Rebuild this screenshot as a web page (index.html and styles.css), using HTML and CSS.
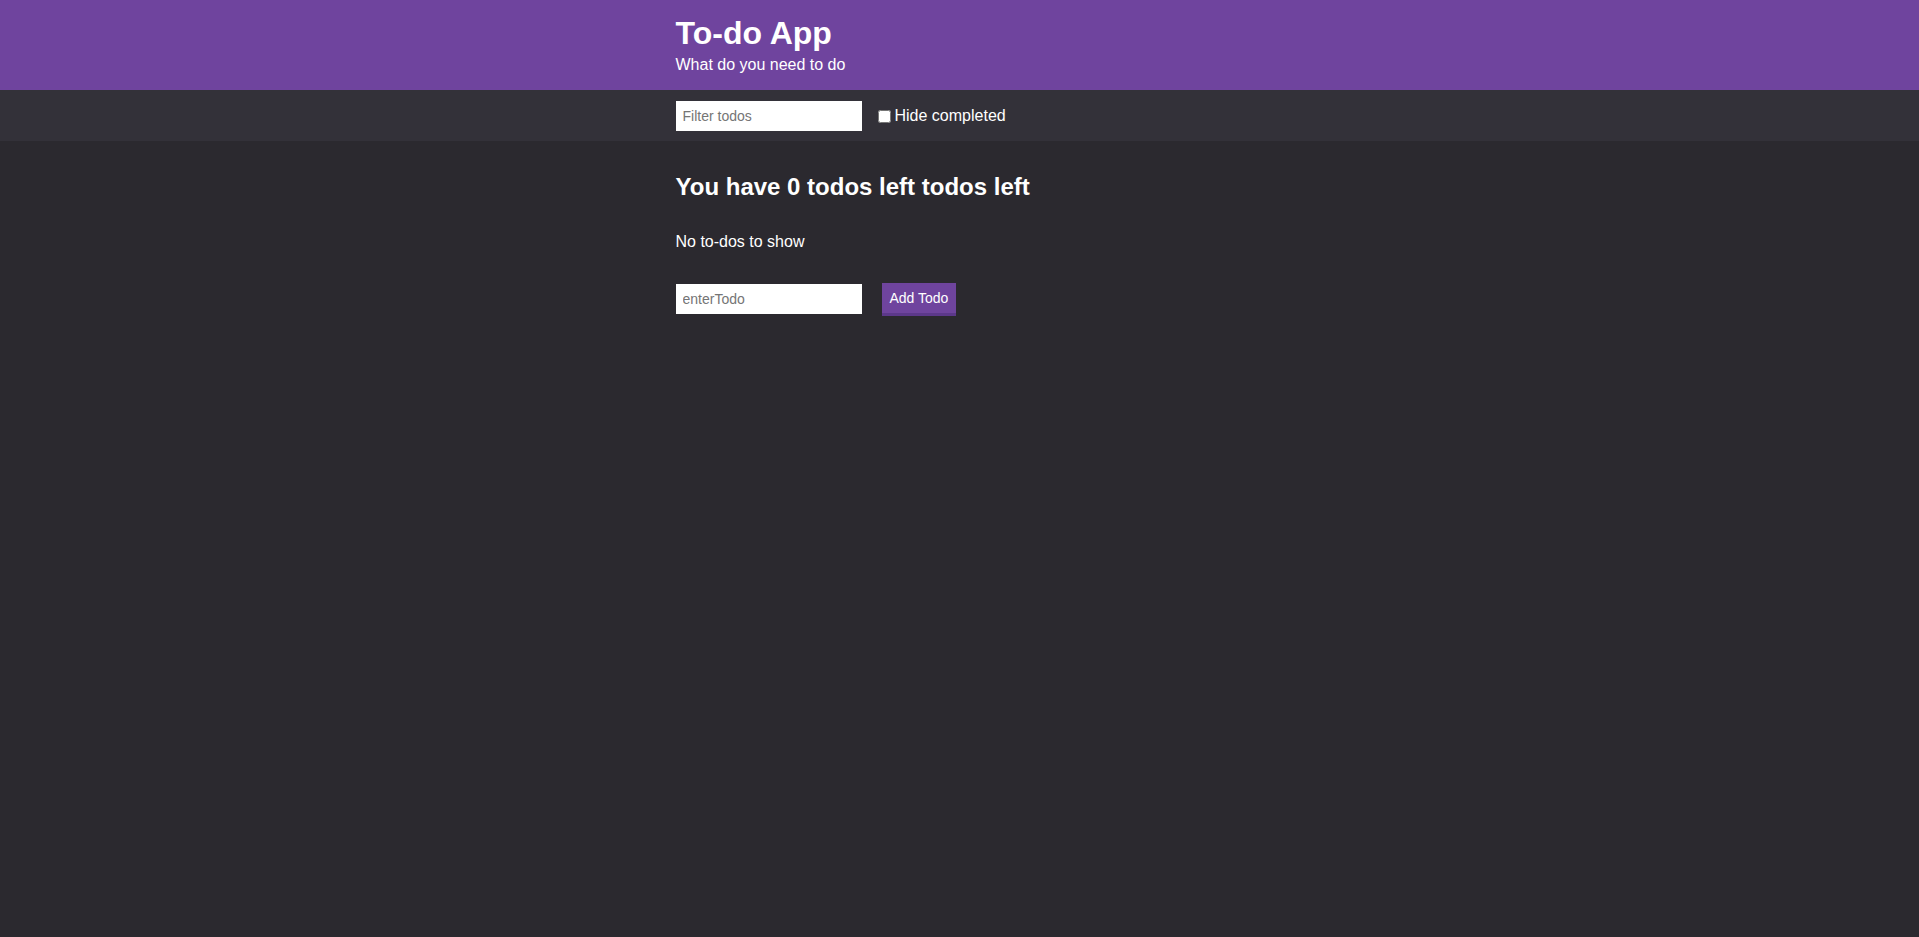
FILE: index.html
```html
<!DOCTYPE html>
<html lang="en">
<head>
<meta charset="utf-8">
<title>To-do App</title>
<link rel="stylesheet" href="styles.css">
</head>
<body>
<header class="header">
  <div class="container">
    <h1 class="header__title">To-do App</h1>
    <p class="header__subtitle">What do you need to do</p>
  </div>
</header>
<div class="filters">
  <div class="container filters__row">
    <input class="input" type="text" placeholder="Filter todos">
    <label class="checkbox"><input type="checkbox"> Hide completed</label>
  </div>
</div>
<main class="container main">
  <h2 class="summary">You have 0 todos left todos left</h2>
  <p class="empty">No to-dos to show</p>
  <form class="add-form">
    <input class="input" type="text" placeholder="enterTodo">
    <button class="button" type="button">Add Todo</button>
  </form>
</main>
</body>
</html>
```
FILE: styles.css
```css
* { box-sizing: border-box; }
html, body { margin: 0; padding: 0; }
body {
  background: #2b292f;
  color: #ffffff;
  font-family: "Liberation Sans", Arial, sans-serif;
  font-size: 16px;
  min-height: 937px;
}
.container {
  max-width: 600px;
  margin: 0 auto;
  padding: 0 16px;
}
.header {
  background: #6f449e;
  height: 90px;
  padding-top: 14px;
}
.header__title {
  margin: 0;
  font-size: 32px;
  font-weight: bold;
  line-height: 38px;
}
.header__subtitle {
  margin: 3px 0 0;
  font-size: 16px;
  line-height: 20px;
}
.filters {
  background: #333139;
  height: 51px;
  padding-top: 11px;
}
.filters__row {
  display: flex;
  align-items: center;
  gap: 13px;
}
.input {
  width: 186px;
  height: 30px;
  border: 0;
  padding: 0 7px;
  font-family: "Liberation Sans", Arial, sans-serif;
  font-size: 14px;
  background: #fff;
  color: #333;
  outline: none;
  box-shadow: none;
}
.input::placeholder { color: #757575; }
.checkbox {
  display: flex;
  align-items: center;
  font-size: 16px;
}
.checkbox input {
  margin: 0 4px 0 3px;
  width: 13px;
  height: 13px;
}
.main {
  padding-top: 32px;
}
.summary {
  margin: 0;
  font-size: 24px;
  font-weight: bold;
  line-height: 28px;
}
.empty {
  margin: 31px 0 0;
  font-size: 16px;
  line-height: 20px;
}
.add-form {
  margin-top: 31px;
  display: flex;
  align-items: flex-start;
  gap: 20px;
}
.add-form .input { margin-top: 1px; }
.button {
  background: #6f449e;
  color: #fff;
  border: none;
  border-bottom: 3px solid #5c388a;
  font-family: "Liberation Sans", Arial, sans-serif;
  font-size: 14px;
  height: 33px;
  padding: 0 8px;
  cursor: pointer;
}
```
